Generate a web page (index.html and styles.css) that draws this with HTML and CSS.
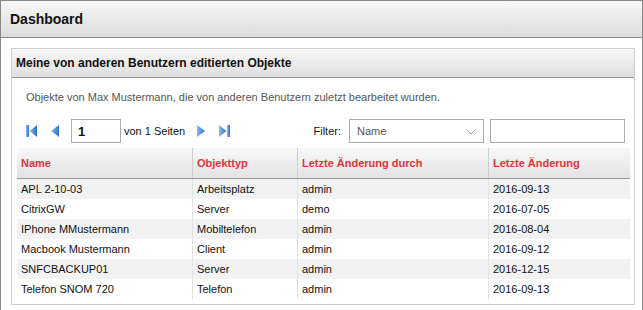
FILE: index.html
```html
<!DOCTYPE html>
<html lang="de">
<head>
  <meta charset="UTF-8">
  <title>Dashboard</title>
  <link rel="stylesheet" href="styles.css">
</head>
<body>

  <div class="panel">
    <div class="panel-head">Dashboard</div>
    <div class="panel-body">

      <div class="box">
        <div class="box-head">Meine von anderen Benutzern editierten Objekte</div>
        <div class="box-body">
          <p class="desc">Objekte von Max Mustermann, die von anderen Benutzern zuletzt bearbeitet wurden.</p>

          <div class="pager">
            <div class="pager-nav">
              <svg class="ico first" width="11" height="12" viewBox="0 0 11 12">
                <defs>
                  <linearGradient id="g1" x1="0" y1="0" x2="1" y2="0">
                    <stop offset="0" stop-color="#8fb8ee"/>
                    <stop offset="1" stop-color="#2a6fd6"/>
                  </linearGradient>
                </defs>
                <rect x="0" y="0" width="3" height="12" fill="url(#g1)"/>
                <polygon points="11,0 11,12 3.5,6" fill="url(#g1)"/>
              </svg>
              <svg class="ico prev" width="8" height="12" viewBox="0 0 8 12">
                <polygon points="8,0 8,12 0,6" fill="url(#g1)"/>
              </svg>
              <input class="page-input" type="text" value="1">
              <span class="page-text">von 1 Seiten</span>
              <svg class="ico next" width="8" height="12" viewBox="0 0 8 12">
                <polygon points="0,0 0,12 8,6" fill="url(#g1)"/>
              </svg>
              <svg class="ico last" width="11" height="12" viewBox="0 0 11 12">
                <polygon points="0,0 0,12 7.5,6" fill="url(#g1)"/>
                <rect x="8" y="0" width="3" height="12" fill="url(#g1)"/>
              </svg>
            </div>
            <div class="filter">
              <label>Filter:</label>
              <div class="select">
                <span>Name</span>
                <svg class="chev" width="10" height="6" viewBox="0 0 10 6">
                  <polyline points="0.5,0.5 5,5 9.5,0.5" fill="none" stroke="#999" stroke-width="1"/>
                </svg>
              </div>
              <input class="filter-input" type="text">
            </div>
          </div>

          <table class="grid">
            <thead>
              <tr>
                <th class="c1">Name</th><th class="c2">Objekttyp</th><th class="c3">Letzte Änderung durch</th><th class="c4">Letzte Änderung</th>
              </tr>
            </thead>
            <tbody>
              <tr><td>APL 2-10-03</td><td>Arbeitsplatz</td><td>admin</td><td>2016-09-13</td></tr>
              <tr><td>CitrixGW</td><td>Server</td><td>demo</td><td>2016-07-05</td></tr>
              <tr><td>IPhone MMustermann</td><td>Mobiltelefon</td><td>admin</td><td>2016-08-04</td></tr>
              <tr><td>Macbook Mustermann</td><td>Client</td><td>admin</td><td>2016-09-12</td></tr>
              <tr><td>SNFCBACKUP01</td><td>Server</td><td>admin</td><td>2016-12-15</td></tr>
              <tr><td>Telefon SNOM 720</td><td>Telefon</td><td>admin</td><td>2016-09-13</td></tr>
            </tbody>
          </table>
        </div>
      </div>

    </div>
  </div>

</body>
</html>
```

FILE: styles.css
```css
body {
  margin: 0;
  font-family: "Liberation Sans", Arial, sans-serif;
  background: white;
  color: #111;
}

.panel {
  width: 643px;
  box-sizing: border-box;
  border: 1px solid #888;
  border-bottom: none;
  height: 320px;
}

.panel-head {
  height: 36px;
  line-height: 36px;
  padding-left: 9px;
  font-size: 14px;
  font-weight: bold;
  color: #111;
  background: linear-gradient(#f7f7f7, #dcdcdc);
  border-bottom: 1px solid #888;
}

.panel-body {
  padding: 10px 7px 0 10px;
}

.box {
  border: 1px solid #ccc;
}

.box-head {
  height: 28px;
  line-height: 28px;
  padding-left: 4px;
  font-size: 12px;
  font-weight: bold;
  color: #111;
  background: linear-gradient(#f8f8f8, #dedede);
  border-bottom: 1px solid #999;
}

.box-body {
  padding: 0 3px 5px 5px;
}

.desc {
  margin: 12px 0 0 9px;
  font-size: 11px;
  line-height: 14px;
  color: #555;
}

.pager {
  display: flex;
  justify-content: space-between;
  align-items: center;
  height: 24px;
  margin-top: 15px;
}

.pager-nav {
  display: flex;
  align-items: center;
  padding-left: 9px;
}

.ico {
  display: block;
}

.prev {
  margin-left: 14px;
}

.page-input {
  box-sizing: border-box;
  width: 50px;
  height: 24px;
  margin: 0 0 0 12px;
  padding: 0 6px;
  border: 1px solid #aaa;
  font-family: inherit;
  font-size: 13px;
  font-weight: bold;
  color: #111;
}

.page-text {
  margin-left: 3px;
  font-size: 11px;
  color: #111;
}

.next {
  margin-left: 12px;
}

.last {
  margin-left: 14px;
}

.filter {
  display: flex;
  align-items: center;
  padding-right: 6px;
}

.filter label {
  font-size: 11px;
  color: #111;
  margin-right: 8px;
}

.select {
  position: relative;
  box-sizing: border-box;
  width: 135px;
  height: 24px;
  line-height: 22px;
  padding-left: 7px;
  border: 1px solid #aaa;
  font-size: 11px;
  color: #555;
  background: white;
}

.chev {
  position: absolute;
  right: 7px;
  top: 9px;
}

.filter-input {
  box-sizing: border-box;
  width: 135px;
  height: 24px;
  margin: 0 0 0 6px;
  border: 1px solid #aaa;
}

.grid {
  width: 613px;
  margin-top: 5px;
  border-collapse: collapse;
  font-size: 11px;
  table-layout: fixed;
}

.grid th {
  height: 30px;
  padding: 0 4px;
  text-align: left;
  font-weight: bold;
  color: #e3343a;
  background: linear-gradient(#f8f8f8, #e2e2e2);
  border-left: 1px solid #ccc;
  border-bottom: 1px solid #999;
}

.grid th:first-child {
  border-left: none;
}

.c1 { width: 167px; }
.c2 { width: 96px; }
.c3 { width: 182px; }

.grid td {
  height: 20px;
  padding: 0 4px;
  color: #111;
  border-left: 1px solid #e2e2e2;
}

.grid td:first-child {
  border-left: none;
}

.grid tbody tr:nth-child(odd) {
  background: #f2f2f2;
}
```
